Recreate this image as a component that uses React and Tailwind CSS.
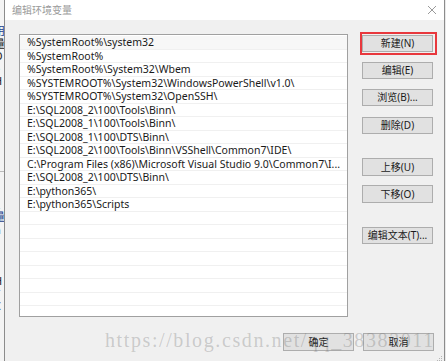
import React from "react";

const paths = [
  "%SystemRoot%\\system32",
  "%SystemRoot%",
  "%SystemRoot%\\System32\\Wbem",
  "%SYSTEMROOT%\\System32\\WindowsPowerShell\\v1.0\\",
  "%SYSTEMROOT%\\System32\\OpenSSH\\",
  "E:\\SQL2008_2\\100\\Tools\\Binn\\",
  "E:\\SQL2008_1\\100\\Tools\\Binn\\",
  "E:\\SQL2008_1\\100\\DTS\\Binn\\",
  "E:\\SQL2008_2\\100\\Tools\\Binn\\VSShell\\Common7\\IDE\\",
  "C:\\Program Files (x86)\\Microsoft Visual Studio 9.0\\Common7\\I...",
  "E:\\SQL2008_2\\100\\DTS\\Binn\\",
  "E:\\python365\\",
  "E:\\python365\\Scripts",
];

// empty rows fill the rest of the list box
const rows = [...paths, ...Array(8).fill("")];

// bits of the window that sits behind the dialog
const behind = [
  { t: "用", c: "text-[#1b3f8b]" },
  { t: "量", c: "text-[#222]" },
  { t: "O", c: "text-[#222]" },
  { t: "e", c: "text-[#222]" },
  { t: "H", c: "text-[#222]" },
  { t: "v", c: "text-[#222]" },
  { t: "F", c: "text-[#222]" },
];
const behind2 = [
  { t: "2", c: "text-[#222]" },
  { t: "量", c: "text-[#1b3f8b]" },
  { t: "n", c: "text-[#222]" },
  { t: "v", c: "text-[#222]" },
  { t: "F", c: "text-[#222]" },
];

const Btn = ({ children, className = "" }) => (
  <div
    className={
      "h-[17px] w-[71px] flex items-center justify-center bg-[#e1e1e1] border border-[#adadad] text-[10px] text-[#1a1a1a] " +
      className
    }
  >
    {children}
  </div>
);

export default function App() {
  return (
    <div
      className="relative w-[446px] h-[361px] overflow-hidden bg-[#e9e9e9] flex"
      style={{ fontFamily: '"Noto Sans", "Noto Sans CJK SC", sans-serif' }}
    >
      {/* window behind */}
      <div className="w-[4px] shrink-0 overflow-hidden bg-[#f4f4f4] text-[11px] leading-[12.5px]">
        <div className="-ml-[6px] pt-[25px] flex flex-col">
          {behind.map((b, i) => (
            <span key={i} className={b.c}>{b.t}</span>
          ))}
        </div>
        <div className="h-px bg-[#bbb] mt-[58px]" />
        <div className="-ml-[6px] pt-[27px] flex flex-col">
          {behind2.map((b, i) => (
            <span key={i} className={b.c}>{b.t}</span>
          ))}
        </div>
        <div className="-ml-[6px] pt-[14px] flex flex-col">
          <span className="text-[#222]">H</span>
          <span className="text-[#6b2a8b]">T</span>
          <span className="text-[#222]">C</span>
        </div>
      </div>

      {/* dialog */}
      <div className="w-[441px] shrink-0 h-full flex flex-col bg-[#f0f0f0] border-l border-r border-[#8c8c8c]">
        <div className="h-[20px] shrink-0 bg-white flex items-center justify-between pl-[7px] pr-[7px]">
          <span className="text-[10px] text-[#9a9a9a]">编辑环境变量</span>
          <svg width="10" height="10" viewBox="0 0 10 10" className="mb-[1px]">
            <path d="M1 1 L9 9 M9 1 L1 9" stroke="#9a9a9a" strokeWidth="1" fill="none" />
          </svg>
        </div>

        <div className="flex-1 flex flex-col pl-[14px] pr-[10px] pt-[14px]">
          <div className="flex gap-[14px]">
            {/* list */}
            <div className="w-[329px] h-[283px] bg-white border border-[#a0a0a0] overflow-hidden pt-px">
              {rows.map((r, i) => (
                <div
                  key={i}
                  className={
                    "h-[13.5px] flex items-center pl-[7px] border-b border-[#f0f0f0] text-[10.5px] leading-none text-[#1a1a1a] whitespace-nowrap " +
                    (i === 0 ? "bg-[#f7f7f7]" : "")
                  }
                >
                  {r}
                </div>
              ))}
            </div>

            {/* buttons */}
            <div className="w-[71px] flex flex-col pt-[1px]">
              <div className="relative">
                <Btn>新建(N)</Btn>
                <span className="absolute -left-[2px] -right-[4px] -top-[3px] -bottom-[3px] border-2 border-[#e8383d]" />
              </div>
              <Btn className="mt-[10px]">编辑(E)</Btn>
              <Btn className="mt-[10px]">浏览(B)...</Btn>
              <Btn className="mt-[11px]">删除(D)</Btn>
              <Btn className="mt-[24px] h-[18px]">上移(U)</Btn>
              <Btn className="mt-[9px] h-[18px]">下移(O)</Btn>
              <Btn className="mt-[24px] h-[17px]">编辑文本(T)...</Btn>
            </div>
          </div>

          <div className="flex justify-end gap-[9px] mt-[16px]">
            <Btn className="h-[18px]">确定</Btn>
            <Btn className="h-[18px]">取消</Btn>
          </div>
        </div>
      </div>

      {/* resize grip */}
      <svg width="6" height="5" viewBox="0 0 6 5" className="absolute right-[3px] bottom-0">
        <rect x="4" y="0" width="1" height="1" fill="#b5b5b5" />
        <rect x="2" y="2" width="1" height="1" fill="#b5b5b5" />
        <rect x="4" y="2" width="1" height="1" fill="#b5b5b5" />
        <rect x="0" y="4" width="1" height="1" fill="#b5b5b5" />
        <rect x="2" y="4" width="1" height="1" fill="#b5b5b5" />
        <rect x="4" y="4" width="1" height="1" fill="#b5b5b5" />
      </svg>

      {/* watermark */}
      <div
        className="absolute left-[105px] top-[328px] text-[20px] leading-[24px] tracking-[1.6px] text-[rgba(110,110,110,0.3)] whitespace-nowrap pointer-events-none"
        style={{ fontFamily: '"Liberation Serif", serif' }}
      >
        https://blog.csdn.net/qq_38383011
      </div>
    </div>
  );
}
